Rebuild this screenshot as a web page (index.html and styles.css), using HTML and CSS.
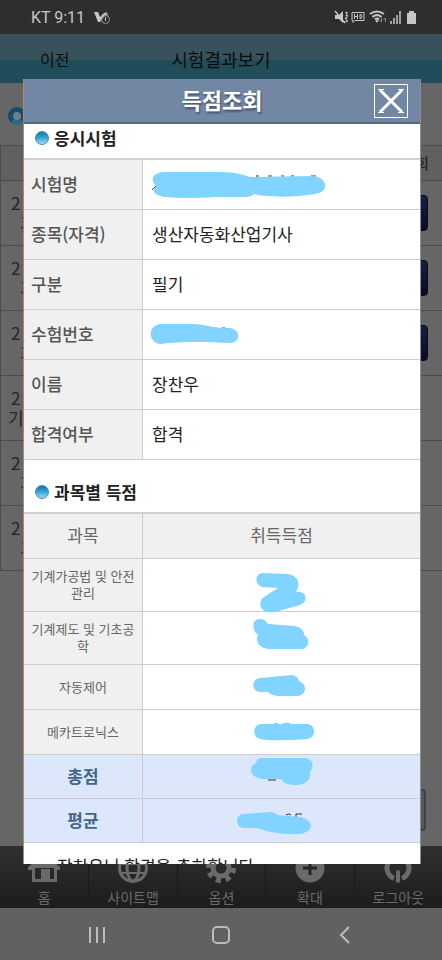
FILE: index.html
```html
<!DOCTYPE html>
<html lang="ko">
<head>
<meta charset="utf-8">
<meta name="viewport" content="width=device-width, initial-scale=1">
<title>득점조회</title>
<link rel="stylesheet" href="styles.css">
</head>
<body>
<div class="status">
  <span class="status-text">KT 9:11</span>
  <svg class="status-app" width="16" height="14" viewBox="92 11 16 14" fill="none" stroke="#c6c6c6">
    <path d="M92 12h4l2 5 4-4h3l-7 9h-2z" fill="#c6c6c6" stroke="none"/>
    <circle cx="103.500" cy="19.500" r="4" stroke="#999"/><path d="M103.500 17v4M103 13h2v3" />
  </svg>
  <svg class="status-icons" width="82" height="16" viewBox="335 10 82 16" fill="none" stroke="#c6c6c6">
    <path d="M335 15h4l4-4v12l-4-4h-4z" fill="#c6c6c6" stroke="none"/>
    <path d="M335 11l10 12" stroke-width="1.500"/><path d="M347 12l-1 2 1 2-1 2 1 2-1 3" stroke-width="2" stroke-dasharray="2 1"/>
    <path d="M352 12.500h12v8h-9l-2 2v-2h-1z"/><path d="M354.500 14v5M357.500 14v5M354 16.500h3M360 14.500v4h1q2-2 0-4z"/>
    <path d="M370 14q7-5 14 0M372.500 17q4.500-4 9 0M375 19.500q2-2 4 0" stroke-width="2"/><circle cx="377" cy="21" r="1" fill="#c6c6c6"/>
    <path d="M381.500 18v4l-2-2M385.500 22v-4l-2 2" stroke="#888"/>
    <path d="M391 21v3M394 18v6M397 15v9M400 11v13" stroke-width="1.500"/>
    <path d="M407 13h2v-2h5v2h2v11h-9z" fill="#c6c6c6" stroke="none"/>
  </svg>
</div>

<header class="topbar">
  <a class="back" href="#">이전</a>
  <span class="page-title">시험결과보기</span>
</header>

<main class="page">
  <span class="ring"></span>
  <table class="list">
    <thead><tr><th></th><th>회</th></tr></thead>
    <tbody>
      <tr><td>2<br><span class="edge">기</span></td><td><button class="view" type="button" aria-label="조회"></button></td></tr>
      <tr><td>2<br><span class="edge">기</span></td><td><button class="view" type="button" aria-label="조회"></button></td></tr>
      <tr><td>2<br><span class="edge">기</span></td><td><button class="view" type="button" aria-label="조회"></button></td></tr>
      <tr><td>2<br><span class="near">기</span></td><td></td></tr>
      <tr><td>2<br><span class="edge">기</span></td><td></td></tr>
      <tr><td>2<br><span class="edge">기</span></td><td></td></tr>
    </tbody>
  </table>
  <button class="more" type="button" aria-label="더보기"></button>
</main>

<nav class="tabs">
  <a href="#"><svg width="34" height="28" viewBox="0 0 34 28"><path fill="#6a6a6a" d="M17-2L1 11v3h4v12h25V14h3v-3zM8 23V12h19v11h-4V13h-9v10z"/></svg>홈</a>
  <a href="#"><svg width="34" height="28" viewBox="0 0 34 28" fill="none" stroke="#6a6a6a" stroke-width="3"><circle cx="17" cy="12" r="13.500"/><ellipse cx="17" cy="12" rx="6" ry="13"/><path d="M4 8h26M4 17h26" stroke-width="2"/></svg>사이트맵</a>
  <a href="#"><svg width="34" height="28" viewBox="0 0 34 28" fill="none" stroke="#6a6a6a"><circle cx="17" cy="12" r="8" stroke-width="5"/><circle cx="17" cy="12" r="12.500" stroke-width="5" stroke-dasharray="5 4.817"/></svg>옵션</a>
  <a href="#"><svg width="34" height="28" viewBox="0 0 34 28"><circle cx="17" cy="12" r="14.500" fill="#6a6a6a"/><path d="M17 5v14M10 12h14" stroke="#252525" stroke-width="3"/></svg>확대</a>
  <a href="#"><svg width="34" height="28" viewBox="0 0 34 28" fill="none" stroke="#6a6a6a"><path d="M13 22.300A11 11 0 1 1 21 22.300" stroke-width="5"/><path d="M17 16v9" stroke-width="4" stroke-linecap="round"/></svg>로그아웃</a>
</nav>

<div class="sysnav">
  <button type="button" aria-label="최근 앱"><svg width="18" height="18" viewBox="0 0 18 18" stroke="#bcbcbc" stroke-width="2"><path d="M2 1v16M9 1v16M16 1v16"/></svg></button>
  <button type="button" aria-label="홈 화면"><svg width="18" height="18" viewBox="0 0 18 18" fill="none" stroke="#bcbcbc" stroke-width="2"><rect x="1" y="1" width="16" height="16" rx="4"/></svg></button>
  <button type="button" aria-label="뒤로"><svg width="18" height="18" viewBox="0 0 18 18" fill="none" stroke="#bcbcbc" stroke-width="2"><path d="M13 1L5 9l8 8"/></svg></button>
</div>

<section class="dialog" role="dialog" aria-labelledby="dialog-title">
  <div class="dialog-head">
    <h1 id="dialog-title">득점조회</h1>
    <button class="close" type="button" aria-label="닫기"><svg width="30" height="30" viewBox="0 0 30 30" fill="none" stroke="#fff" stroke-width="3"><path d="M4 4l22 22M26 4L4 26"/><path d="M2 3.500h6M22 3.500h6M2 26.500h6M22 26.500h6" stroke-width="1"/></svg></button>
  </div>
  <div class="dialog-body">
    <h2><span class="dot"></span>응시시험</h2>
    <table class="info">
      <tr><th scope="row">시험명</th><td><svg width="180" height="30" viewBox="152 169 180 30"><path d="M152 190l4-4M256 176h3M268 176h4M281 176h3M291 176h3M311 176h5" stroke="#333" fill="none"/><path class="ink" d="M162 172H215C230 172 240 173 250 177L312 176C329 177 329 193 315 194C298 197 270 198 254 194Q251 197 245 197H215Q190 199 164 197Q149 194 156 186Q147 175 162 172Z"/></svg></td></tr>
      <tr><th scope="row">종목(자격)</th><td>생산자동화산업기사</td></tr>
      <tr><th scope="row">구분</th><td>필기</td></tr>
      <tr><th scope="row">수험번호</th><td><svg width="180" height="30" viewBox="152 319 180 30"><path d="M222 328h3" stroke="#333"/><path class="ink" d="M160 324H195C207 325 212 328 230 328C241 330 241 342 231 343C210 342 180 341 161 344C148 343 147 326 160 324Z"/></svg></td></tr>
      <tr><th scope="row">이름</th><td>장찬우</td></tr>
      <tr><th scope="row">합격여부</th><td>합격</td></tr>
    </table>
    <h2 class="second"><span class="dot"></span>과목별 득점</h2>
    <table class="scores">
      <thead><tr><th scope="col">과목</th><th scope="col">취득득점</th></tr></thead>
      <tbody>
        <tr><th scope="row">기계가공법 및 안전관리</th><td><svg width="120" height="40" viewBox="222 565 120 40"><path class="ink" d="M263 573L287 574C298 575 301 583 296 592C307 590 309 602 300 605L275 612C260 615 257 602 264 597L278 588L262 587C254 584 255 573 263 573Z"/></svg></td></tr>
        <tr><th scope="row">기계제도 및 기초공학</th><td><svg width="120" height="40" viewBox="222 618 120 40"><path class="ink" d="M260 619Q265 619 268 624L295 626Q304 628 304 635C312 640 308 649 301 649H270C259 649 255 641 258 635C251 629 252 619 260 619Z"/></svg></td></tr>
        <tr><th scope="row">자동제어</th><td><svg width="120" height="40" viewBox="222 667 120 40"><path class="ink" d="M260 678L292 675Q298 676 299 681C308 685 306 695 298 696H280Q272 696 268 692H260C251 691 251 679 260 678Z"/></svg></td></tr>
        <tr><th scope="row">메카트로닉스</th><td><svg width="120" height="40" viewBox="222 712 120 40"><path d="M274 724h4M283 724h7" stroke="#777"/><path class="ink" d="M261 724H307C317 725 316 738 307 739Q285 741 265 740L261 739C252 738 252 725 261 724Z"/></svg></td></tr>
        <tr class="sum"><th scope="row">총점</th><td><svg width="120" height="40" viewBox="222 757 120 40"><path d="M268 780h8" stroke="#333"/><path class="ink" d="M262 758H305C314 759 314 768 310 771C312 780 305 785 296 785Q284 785 281 779H263C249 778 248 766 256 763Q257 758 262 758Z"/></svg></td></tr>
        <tr class="sum"><th scope="row">평균</th><td><svg width="120" height="40" viewBox="222 801 120 40"><path d="M286 815q3-2 5 0M296 814h6M296 814v3" stroke="#333" fill="none"/><path class="ink" d="M243 814L272 812L278 815L300 817C315 820 314 832 300 834Q275 835 257 828H244C235 827 235 815 243 814Z"/></svg></td></tr>
      </tbody>
    </table>
    <p class="message">장찬우님 합격을 축하합니다</p>
  </div>
</section>
</body>
</html>
```
FILE: styles.css
```css
* { box-sizing: border-box; }
body {
  margin: 0;
  min-height: 100vh;
  position: relative;
  display: flex;
  flex-direction: column;
  background: #666;
  font-family: "Noto Sans CJK KR", sans-serif;
  font-size: 17px;
  line-height: 24px;
  color: #222;
}
a { color: inherit; text-decoration: none; }
button { padding: 0; border: 0; background: none; }
svg { display: block; overflow: visible; }
table { width: 100%; border-collapse: separate; border-spacing: 0; table-layout: fixed; }

.status {
  height: 34px;
  flex: none;
  display: flex;
  align-items: center;
  padding: 2px 25px 0 31px;
  background: #2e2e2e;
  color: #c6c6c6;
  font-family: Roboto, sans-serif;
  font-size: 16px;
}
.status-app { margin-left: 9px; }
.status-icons { margin-left: auto; }

.topbar {
  height: 49px;
  flex: none;
  display: grid;
  grid-template-columns: 1fr auto 1fr;
  align-items: center;
  padding-left: 40px;
  padding-right: 40px;
  background: linear-gradient(#37525b 0 52%, #214c5a 54% 100%);
  color: #080c0e;
}
.back { font-size: 16px; }
.page-title { font-size: 18px; }

.page { flex: 1; position: relative; display: flex; flex-direction: column; }
.ring {
  width: 18px;
  height: 18px;
  margin: 24px 0 20px 8px;
  border: 5px solid #174b68;
  border-bottom-color: #2a6a86;
  border-radius: 50%;
  background: #6d7e88;
}
.list { border-top: 1px solid #4c4c4c; border-left: 1px solid #4c4c4c; color: #252525; }
.list th { height: 35px; padding: 0 13px 0 0; text-align: right; font-size: 15px; font-weight: 500; background: #606060; border-bottom: 1px solid #4c4c4c; }
.list td { height: 65px; padding: 0 0 0 10px; line-height: 20px; border-bottom: 1px solid #4c4c4c; }
.list td:last-child { padding: 0 14px 0 0; }
.edge { padding-left: 9px; }
.near { margin-left: -3px; }
.view {
  display: block;
  width: 60px;
  height: 36px;
  margin-left: auto;
  border: 1px solid #050a20;
  border-radius: 4px;
  background: linear-gradient(#172040, #070c24);
}
.more {
  width: 80px;
  height: 42px;
  margin: auto 16px 15px auto;
  border: 2px solid #404244;
  border-radius: 4px;
  background: #55595c;
}

.tabs {
  height: 62px;
  flex: none;
  display: grid;
  grid-template-columns: repeat(5, 1fr);
  background: linear-gradient(#303030, #1c1c1c);
  color: #6a6a6a;
  font-size: 14px;
}
.tabs a { display: flex; flex-direction: column; align-items: center; padding-top: 10px; line-height: 26px; }
.tabs a + a {
  border-left: 1px solid;
  border-image: linear-gradient(#1a1a1a 80%, transparent 80%) 1;
}

.sysnav { height: 52px; flex: none; display: flex; justify-content: space-between; align-items: center; padding: 2px 88px 0; background: #616161; }

.dialog {
  position: absolute;
  top: 79px;
  bottom: 96px;
  left: 23px;
  right: 21px;
  display: flex;
  flex-direction: column;
  overflow: hidden;
  background: #fff;
  border-left: 1px solid #a58b70;
  border-right: 1px solid #8b8f98;
}
.dialog-head {
  height: 45px;
  flex: none;
  display: grid;
  grid-template-columns: 1fr auto 1fr;
  align-items: center;
  padding: 0 12px;
  background: #7287a4;
  border-bottom: 2px solid #536785;
}
h1 { grid-column: 2; margin: 0; padding-bottom: 3px; color: #fff; font-size: 22px; font-weight: 700; text-shadow: 1px 2px 2px #43536b; }
.close { justify-self: end; display: grid; place-items: center; width: 34px; height: 34px; border: 1px solid #fff; }
.dialog-body { flex: 1; min-height: 0; overflow: hidden; }
h2 {
  display: flex;
  align-items: center;
  gap: 5px;
  margin: 0;
  padding: 0 11px 6px;
  border-bottom: 2px solid #d0d0d0;
  font-size: 17px;
  font-weight: 700;
  line-height: 28px;
}
.second { padding-top: 18px; }
.dot { width: 14px; height: 14px; border: 1px solid #3f8db5; border-radius: 50%; background: linear-gradient(#1577a8, #37a4d4 50%, #a5dcf2); }

.dialog th, .dialog td { border-bottom: 1px solid #ccc; }
.dialog tr > :first-child { width: 119px; border-right: 1px solid #ccc; }
.dialog th { background: #f0f0f0; font-weight: 400; color: #666; }
.info th, .info td { height: 50px; padding: 0 9px 2px; text-align: left; }
.info th { padding-left: 7px; font-weight: 500; color: #555; }
.scores th, .scores td { height: 45px; padding: 0 4px 2px; text-align: center; }
.scores tbody th { padding: 8px 4px 10px; font-size: 13px; line-height: 17px; }
.scores tbody td { padding: 0; }
.scores td svg { margin: 0 auto; }
.scores .sum th, .scores .sum td { height: 44px; background: #dce7fb; }
.scores .sum th { padding: 0 4px 2px; font-size: 17px; font-weight: 700; color: #426588; }
.ink { fill: #80d4ff; }
.message { margin: 0; padding: 11px 33px 0; white-space: nowrap; }
```
